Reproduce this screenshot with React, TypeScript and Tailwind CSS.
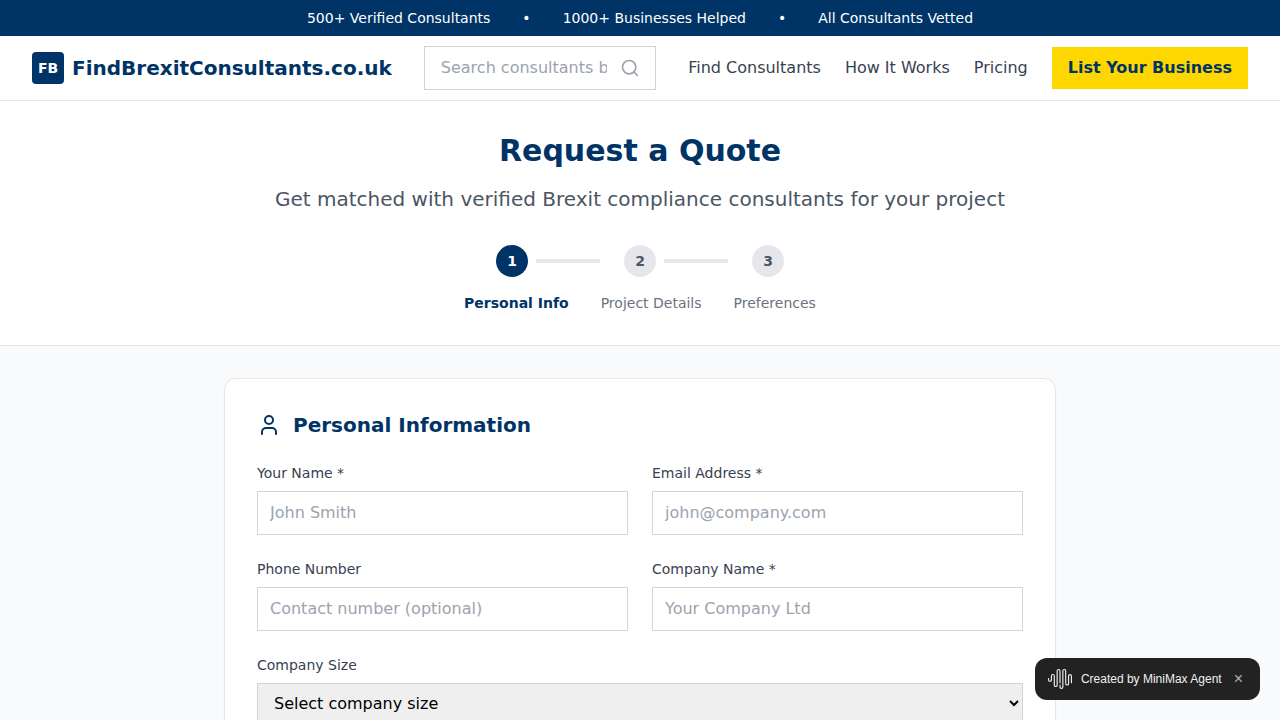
import { Search, User } from "lucide-react";

const stats = ["500+ Verified Consultants", "1000+ Businesses Helped", "All Consultants Vetted"];

const steps = [
  { id: 1, label: "Personal Info" },
  { id: 2, label: "Project Details" },
  { id: 3, label: "Preferences" },
];

const fields = [
  { id: "name", label: "Your Name *", placeholder: "John Smith", type: "text" },
  { id: "email", label: "Email Address *", placeholder: "john@company.com", type: "email" },
  { id: "phone", label: "Phone Number", placeholder: "Contact number (optional)", type: "tel" },
  { id: "company", label: "Company Name *", placeholder: "Your Company Ltd", type: "text" },
];

function TopBar() {
  return (
    <div className="flex items-center justify-center gap-8 bg-[#003366] px-4 py-2 text-sm text-white">
      {stats.map((stat, i) => (
        <div key={stat} className="flex items-center gap-8">
          {i > 0 && <span>•</span>}
          <span>{stat}</span>
        </div>
      ))}
    </div>
  );
}

function Header() {
  return (
    <header className="flex h-[65px] items-center border-b border-[#e5e7eb] bg-white px-8">
      <a href="#" className="flex items-center gap-2">
        <span className="flex size-8 items-center justify-center rounded bg-[#003366] text-sm font-bold text-white">
          FB
        </span>
        <span className="text-xl font-bold text-[#003366]">FindBrexitConsultants.co.uk</span>
      </a>
      <form className="relative mx-8 min-w-0 flex-1">
        <input
          type="text"
          aria-label="Search consultants"
          placeholder="Search consultants by name or service"
          className="block w-full border border-[#d1d5db] bg-white py-3 pr-12 pl-4 leading-[18px] placeholder:text-[#9ca3af]"
        />
        <Search className="absolute top-3 right-4 size-5 text-[#9ca3af]" />
      </form>
      <nav className="flex items-center gap-6 text-[#374151]">
        <a href="#">Find Consultants</a>
        <a href="#">How It Works</a>
        <a href="#">Pricing</a>
        <a href="#" className="bg-[#ffd700] px-4 py-2 leading-[26px] font-semibold text-[#003366]">
          List Your Business
        </a>
      </nav>
    </header>
  );
}

function Intro() {
  return (
    <section className="border-b border-[#e5e7eb] bg-white px-8 py-8 text-center">
      <h1 className="mb-4 text-3xl font-bold text-[#003366]">Request a Quote</h1>
      <p className="mb-8 text-xl text-[#4b5563]">
        Get matched with verified Brexit compliance consultants for your project
      </p>
      <div className="flex items-center justify-center gap-6">
        {steps.map((step, i) => (
          <div key={step.id} className="flex items-center gap-2">
            <span
              className={
                i === 0
                  ? "flex size-8 items-center justify-center rounded-full bg-[#003366] text-sm font-bold text-white"
                  : "flex size-8 items-center justify-center rounded-full bg-[#e5e7eb] text-sm font-bold text-[#4b5563]"
              }
            >
              {step.id}
            </span>
            {i < steps.length - 1 && <span className="h-1 w-16 bg-[#e5e7eb]" />}
          </div>
        ))}
      </div>
      <div className="mt-4 flex justify-center gap-8 text-sm">
        {steps.map((step, i) => (
          <span key={step.id} className={i === 0 ? "font-semibold text-[#003366]" : "text-[#6b7280]"}>
            {step.label}
          </span>
        ))}
      </div>
    </section>
  );
}

function PersonalForm() {
  return (
    <main className="mx-auto max-w-4xl px-8 py-8">
      <form className="rounded-xl border border-[#e5e7eb] bg-white p-8 shadow-xs">
        <h2 className="mb-6 flex items-center gap-3 text-xl font-bold text-[#003366]">
          <User className="size-6" />
          Personal Information
        </h2>
        <div className="grid grid-cols-2 gap-6">
          {fields.map((f) => (
            <div key={f.id}>
              <label htmlFor={f.id} className="mb-2 block text-sm font-medium text-[#374151]">
                {f.label}
              </label>
              <input
                id={f.id}
                type={f.type}
                placeholder={f.placeholder}
                className="block w-full border border-[#d1d5db] bg-white p-3 leading-[18px] placeholder:text-[#9ca3af]"
              />
            </div>
          ))}
          <div className="col-span-2">
            <label htmlFor="size" className="mb-2 block text-sm font-medium text-[#374151]">
              Company Size
            </label>
            <select
              id="size"
              className="block h-10 w-full border border-[#d1d5db] bg-[#efefef] px-3 text-black"
            >
              <option>Select company size</option>
            </select>
          </div>
        </div>
      </form>
    </main>
  );
}

function AgentBadge() {
  return (
    <div className="fixed right-5 bottom-5 flex h-[42px] items-center rounded-xl bg-[#222222] pr-[17px] pl-[13px] font-['Liberation_Sans',Arial,sans-serif] text-xs text-[#f0f0f0]">
      <svg viewBox="0 0 24 24" className="mr-[9px] size-6" fill="#f0f0f0" aria-hidden="true">
        <path d="M11.43 3.92a.86.86 0 1 0-1.718 0v14.236a1.999 1.999 0 0 1-3.997 0V9.022a.86.86 0 1 0-1.718 0v3.87a1.999 1.999 0 0 1-3.997 0V11.49a.57.57 0 0 1 1.139 0v1.404a.86.86 0 0 0 1.719 0V9.022a1.999 1.999 0 0 1 3.997 0v9.134a.86.86 0 0 0 1.719 0V3.92a1.998 1.998 0 1 1 3.996 0v11.788a.57.57 0 1 1-1.139 0zm10.572 3.105a2 2 0 0 0-1.999 1.997v7.63a.86.86 0 0 1-1.718 0V3.923a1.999 1.999 0 0 0-3.997 0v16.16a.86.86 0 0 1-1.719 0V18.08a.57.57 0 1 0-1.138 0v2a1.998 1.998 0 0 0 3.996 0V3.92a.86.86 0 0 1 1.719 0v12.73a1.999 1.999 0 0 0 3.996 0V9.023a.86.86 0 1 1 1.72 0v6.686a.57.57 0 0 0 1.138 0V9.022a2 2 0 0 0-1.998-1.997" />
      </svg>
      <span>Created by MiniMax Agent</span>
      <button type="button" aria-label="Close" className="ml-3 text-base text-[#b0b0b0]">
        ×
      </button>
    </div>
  );
}

export default function App() {
  return (
    <div className="min-h-screen bg-[#f9fafb] font-['DejaVu_Sans',sans-serif]">
      <TopBar />
      <Header />
      <Intro />
      <PersonalForm />
      <AgentBadge />
    </div>
  );
}
